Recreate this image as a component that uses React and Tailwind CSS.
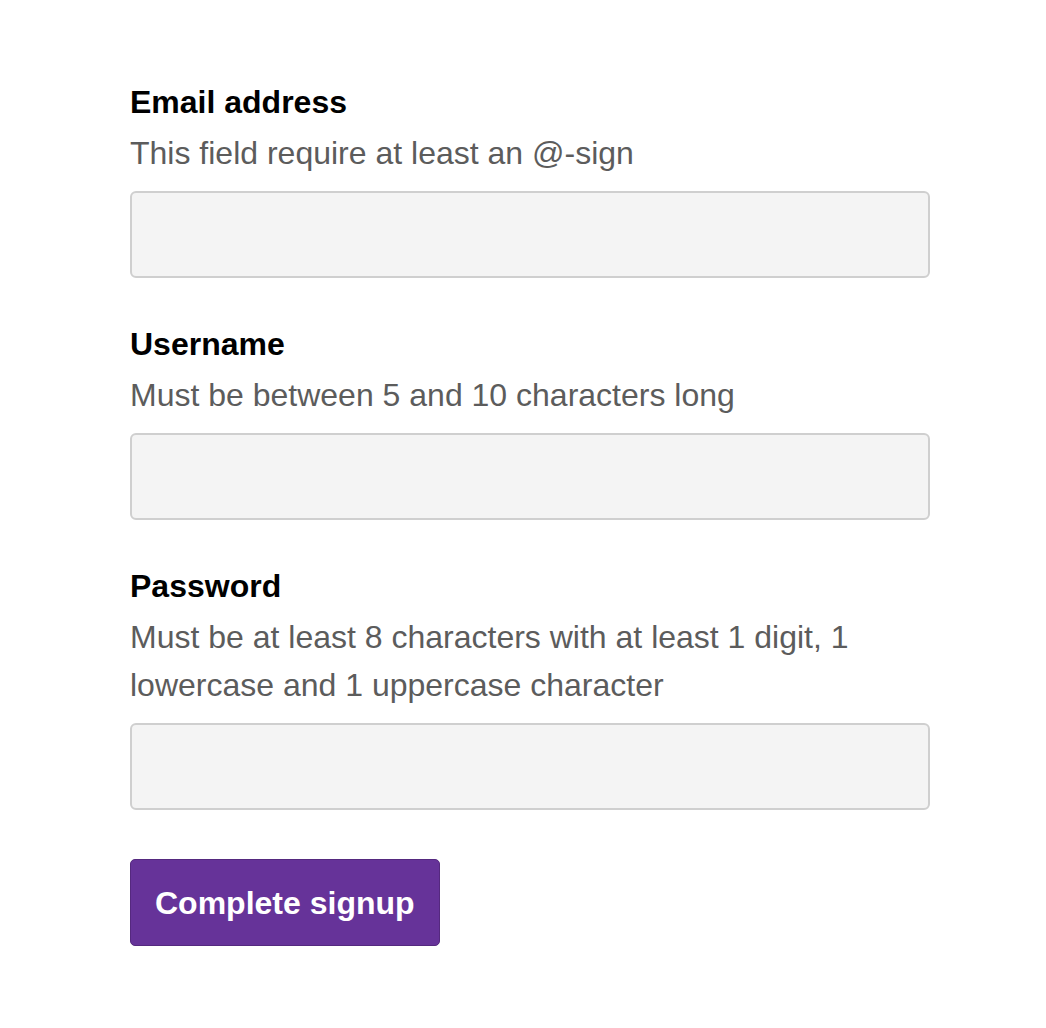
import React from 'react';

const fields = [
  { label: 'Email address', hint: 'This field require at least an @-sign', type: 'email' },
  { label: 'Username', hint: 'Must be between 5 and 10 characters long', type: 'text' },
  {
    label: 'Password',
    hint: 'Must be at least 8 characters with at least 1 digit, 1 lowercase and 1 uppercase character',
    type: 'password',
  },
];

export default function App() {
  return (
    <div className="min-h-screen bg-white pl-[130px] pt-[78px] font-['Liberation_Sans',Arial,sans-serif]">
      <form className="w-[800px] flex flex-col gap-[42px]" onSubmit={(e) => e.preventDefault()}>
        {fields.map((f) => (
          <div key={f.label} className="flex flex-col">
            <label className="text-[32px] leading-[48px] font-bold text-black">{f.label}</label>
            <p className="mt-[3px] text-[32px] leading-[48px] text-[#5c5c5c]">{f.hint}</p>
            <input
              type={f.type}
              className="mt-[14px] h-[87px] w-full rounded-[6px] border-2 border-[#cfcfcf] bg-[#f4f4f4] px-4 text-[32px] outline-none"
            />
          </div>
        ))}
        <div className="mt-[7px]">
          <button
            type="submit"
            className="h-[87px] px-[24px] rounded-[5px] border border-[#55297f] bg-[#663399] text-white text-[32px] font-bold"
          >
            Complete signup
          </button>
        </div>
      </form>
    </div>
  );
}
